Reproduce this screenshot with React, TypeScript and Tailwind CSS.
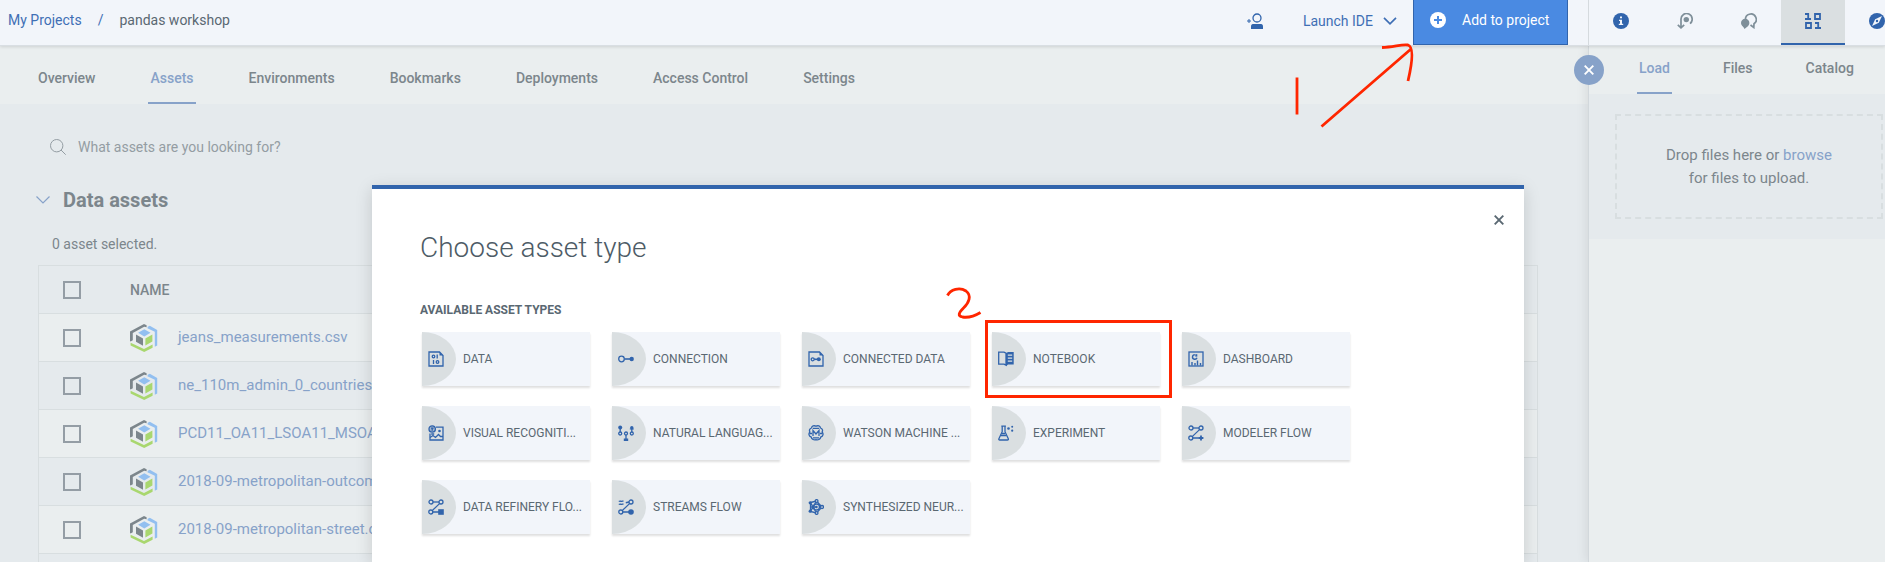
import React from "react";

type IconProps = { children: React.ReactNode; className?: string };

function Glyph({ children, className = "size-4" }: IconProps) {
  return (
    <svg
      viewBox="0 0 16 16"
      className={className}
      fill="none"
      stroke="currentColor"
      strokeWidth="1.3"
      aria-hidden="true"
    >
      {children}
    </svg>
  );
}

const solid = { fill: "currentColor", stroke: "none" };

const FlowBase = () => (
  <>
    <circle cx="2.8" cy="13" r="2" />
    <path d="M4.2 11.6 11.8 4.4M4.8 13H11" />
    <circle cx="13" cy="3" r="2" />
  </>
);

const icons = {
  data: (
    <Glyph>
      <path d="M1 1h10.5L15 4.5V15H1z" />
      <path d="M11.5 1v3.5H15z" {...solid} />
      <circle cx="5.5" cy="5.5" r="1.3" />
      <circle cx="9.5" cy="11" r="1.3" />
      <path d="M9.2 3.6v4M5.5 9v4" />
    </Glyph>
  ),
  connection: (
    <Glyph>
      <circle cx="3.5" cy="8" r="2.8" />
      <path d="M6.5 8H12" strokeWidth="1.6" />
      <circle cx="13.7" cy="8" r="2.2" {...solid} />
    </Glyph>
  ),
  connected: (
    <Glyph>
      <path d="M1 1h10.5L15 4.5V15H1z" />
      <path d="M11.5 1v3.5H15z" {...solid} />
      <circle cx="4.7" cy="8.3" r="1.5" />
      <path d="M6.2 8.3H10" strokeWidth="1.6" />
      <circle cx="10.8" cy="8.3" r="2" {...solid} />
    </Glyph>
  ),
  notebook: (
    <Glyph>
      <path d="M.7 1.2H6L8 2.2v12l-2-1H.7z" />
      <path d="M8 2.2 10 1h5.7v12.6H10l-2 1.6z" {...solid} />
      <path d="M9.8 4.2h4.4M9.8 7.2h4.4M9.8 10.2h4.4" stroke="#dadfe1" />
    </Glyph>
  ),
  dashboard: (
    <Glyph>
      <rect x="1" y="1" width="14" height="14" />
      <path d="M6.8 3.7a2.3 2.3 0 1 0 2.2 3" strokeWidth="1.4" />
      <path d="M7.3 3.2h2v2.4h-2z" {...solid} />
      <path d="M4 11v3.5M7 12v2.5M9.5 9.5v5M12.5 12v2.5" strokeWidth="1.4" />
    </Glyph>
  ),
  visual: (
    <Glyph>
      <path d="M8 2.2h7V15H2V8.5" />
      <circle cx="4.2" cy="4" r="3.2" fill="currentColor" fillOpacity=".35" />
      <path d="M3 3.2h2.6M4.2 3.2v2.6M2 12.5l3-2 2.5 2 3-3 2 2H15M3.2 9h3" />
      <circle cx="11.5" cy="6" r="1.3" {...solid} />
    </Glyph>
  ),
  language: (
    <Glyph>
      <circle cx="2.2" cy="2.5" r="2" {...solid} />
      <circle cx="13.8" cy="2.7" r="1.7" {...solid} />
      <path d="M2.2 3v4M13.8 3v4M8 10v4" />
      <circle cx="2.2" cy="8.5" r="1.5" />
      <circle cx="13.8" cy="8.5" r="1.5" />
      <circle cx="8" cy="8.5" r="1.5" />
      <path d="M5.8 13.6h4.4V16H5.8zM11.8 3.5h4v1h-4z" {...solid} />
    </Glyph>
  ),
  watson: (
    <Glyph>
      <path d="M8 1.2C6 .2 3.8 1 3.5 3 1.5 3.6 1 5.6 1.9 7 .3 8.6.8 11.5 3.2 12c.5 2.4 2.8 3.4 4.8 2.7 2 .7 4.3-.3 4.8-2.7 2.4-.5 2.9-3.4 1.3-5 .9-1.4.4-3.4-1.6-4C12.2 1 10 .2 8 1.2z" />
      <path d="M5 11V5.5L8 9l3-3.5V11M4.8 3.3h6.4M5 12.9h6M1.5 8.5H4M12 8.5h2.5" />
    </Glyph>
  ),
  experiment: (
    <Glyph>
      <path d="M3.3 1.2h4.6M4.2 1.2v5.5L.9 13.7c-.3.8.1 1.3.8 1.3h7.8c.7 0 1.1-.5.8-1.3L7 6.7V1.2" />
      <path d="M2.8 10.5h5.6M4 8.5h3" />
      <circle cx="10.5" cy="3.5" r="1.3" {...solid} />
      <circle cx="14.2" cy="1.7" r="1" {...solid} />
      <circle cx="14.2" cy="5.7" r="1.1" {...solid} />
    </Glyph>
  ),
  modeler: (
    <Glyph>
      <circle cx="3" cy="3" r="2" />
      <path d="M5 3h6" />
      <FlowBase />
      <path d="M10.8 12h1.3v-1.5h1.8V12h1.5v2h-1.5v1.5h-1.8V14h-1.3z" {...solid} />
    </Glyph>
  ),
  refinery: (
    <Glyph>
      <circle cx="3" cy="3" r="2" />
      <path d="M5 3h6" />
      <FlowBase />
      <rect x="10.2" y="10.2" width="5.6" height="5.6" {...solid} />
    </Glyph>
  ),
  streams: (
    <Glyph>
      <path d="M.8 2.5c1.5-1.2 2.6.8 4.7-.7M.8 5.5c1.5-1.2 2.6.8 4.7-.7M7.8 3.8 11 3" strokeWidth="1.4" />
      <FlowBase />
      <circle cx="13" cy="13" r="2.8" {...solid} />
    </Glyph>
  ),
  synthesized: (
    <Glyph>
      <path d="m2.5 3.5 6-1.5L14 8l-5.5 6-6-1.5zM2.5 3.5 8.5 14M8.5 2l-6 10.5M2.5 8h6" />
      <circle cx="8.5" cy="8" r="3" />
      <circle cx="8.5" cy="8" r="1.2" {...solid} />
      <circle cx="2.2" cy="3.8" r="1.6" {...solid} />
      <circle cx="2.2" cy="12.2" r="1.6" {...solid} />
      <circle cx="8.6" cy="2" r="1.4" fill="#dadfe1" />
      <circle cx="8.6" cy="14" r="1.4" fill="#dadfe1" />
      <circle cx="14" cy="8" r="1.5" fill="#dadfe1" />
    </Glyph>
  ),
};

const assetTypes = [
  { label: "DATA", icon: icons.data },
  { label: "CONNECTION", icon: icons.connection },
  { label: "CONNECTED DATA", icon: icons.connected },
  { label: "NOTEBOOK", icon: icons.notebook, marked: true },
  { label: "DASHBOARD", icon: icons.dashboard },
  { label: "VISUAL RECOGNITI...", icon: icons.visual },
  { label: "NATURAL LANGUAG...", icon: icons.language },
  { label: "WATSON MACHINE ...", icon: icons.watson },
  { label: "EXPERIMENT", icon: icons.experiment },
  { label: "MODELER FLOW", icon: icons.modeler },
  { label: "DATA REFINERY FLO...", icon: icons.refinery },
  { label: "STREAMS FLOW", icon: icons.streams },
  { label: "SYNTHESIZED NEUR...", icon: icons.synthesized },
];

const tabs = ["Overview", "Assets", "Environments", "Bookmarks", "Deployments", "Access Control", "Settings"];
const panelTabs = ["Load", "Files", "Catalog"];
const files = [
  "jeans_measurements.csv",
  "ne_110m_admin_0_countries.csv",
  "PCD11_OA11_LSOA11_MSOA11.csv",
  "2018-09-metropolitan-outcomes.csv",
  "2018-09-metropolitan-street.csv",
];

function CubeLogo() {
  return (
    <svg viewBox="0 0 28 28" className="size-7" aria-hidden="true">
      <path fill="#7c868c" d="M0 7.500 14 0l2.600 1.300v2L14.200 2.800 2.800 9v7.200L.6 17.500 0 17z" />
      <path fill="#92bff0" d="m17.800 2.800 2-1.100L27.200 6v15.500l-2.400 1.300V7.800L17.400 4.200z" />
      <path fill="#a9d76f" d="m.6 18.800 13.400 6.300 8.600-4.600v3.300L14.200 28 .6 21.500z" />
      <path fill="#92bff0" d="m14.300 5.200 6.200 3.600-6.200 3.600-6.200-3.600z" />
      <path fill="#7c868c" d="m6 10.500 7 4v7.200l-7-3.900z" />
      <path fill="#a9d76f" d="m22.400 10.500-7 4v7l7-3.900z" />
    </svg>
  );
}

function Cross({ className }: { className: string }) {
  return (
    <svg viewBox="0 0 10 10" className={className} fill="none" stroke="currentColor" strokeWidth="1.9" aria-hidden="true">
      <path d="m.7.7 8.6 8.6M9.3.7.7 9.3" />
    </svg>
  );
}

function TopBar() {
  const iconButton = "flex w-16 shrink-0 items-center justify-center border-b-2 border-transparent pb-0.5";
  return (
    <header className="relative z-10 flex h-[46px] shrink-0 border-b border-[#d9dee3] bg-[#f2f5fa] shadow-[0_1px_3px_rgba(0,0,0,0.12)]">
      <nav aria-label="Breadcrumb" className="flex flex-1 items-center gap-4 pb-1.5 pl-2">
        <a href="#projects" className="text-[#3f6fb5]">My Projects</a>
        <span className="text-[#3f6fb5]">/</span>
        <span>pandas workshop</span>
      </nav>
      <div className="mr-5 flex items-stretch">
        <button type="button" aria-label="Add collaborator" className="mr-10 flex items-center pb-1 text-[#3164ac]">
          <svg viewBox="0 0 16 16" className="size-4" fill="none" stroke="currentColor" strokeWidth="1.3" aria-hidden="true">
            <circle cx="10" cy="5" r="4" />
            <path d="M0 8h4M2 6v4" strokeWidth="1" />
            <path d="M4 16v-2.5C4 11.5 5 11 7 11h6c2 0 3 .5 3 2.5V16z" {...solid} />
          </svg>
        </button>
        <button type="button" className="mr-4 flex items-center gap-2.5 pb-1 text-[#3f6fb5]">
          Launch IDE
          <svg viewBox="0 0 14 8" className="h-2 w-3.5" fill="none" stroke="currentColor" strokeWidth="1.7" aria-hidden="true">
            <path d="m1 .8 6 6 6-6" />
          </svg>
        </button>
        <button type="button" className="flex w-[155px] items-center gap-4 border border-t-0 border-[#3164ac] bg-[#4a8ae2] pb-1 pl-4 text-white">
          <svg viewBox="0 0 16 16" className="size-4" aria-hidden="true">
            <circle cx="8" cy="8" r="8" fill="#fff" />
            <path d="M8 4v8M4 8h8" stroke="#4a8ae2" strokeWidth="2" />
          </svg>
          Add to project
        </button>
      </div>
      <div className="flex w-[297px] overflow-hidden border-l border-[#d5dade]">
        <button type="button" aria-label="Information" className={iconButton + " text-[#3164ac]"}>
          <svg viewBox="0 0 16 16" className="size-4" aria-hidden="true">
            <circle cx="8" cy="8" r="8" fill="currentColor" />
            <path d="M7 3.5h2v1.8H7zM6 6.7h3v4.1h1.2V12H5.8v-1.2H7V8H6z" fill="#f2f5fa" />
          </svg>
        </button>
        <button type="button" aria-label="History" className={iconButton + " text-[#7f8f99]"}>
          <svg viewBox="0 0 16 16" className="size-4" fill="none" stroke="currentColor" strokeWidth="1.7" aria-hidden="true">
            <path d="M13 10.6A5.6 5.6 0 1 0 4 6.4V14.5M.8 11.8l3.2 3 3.2-3" />
            <circle cx="9.3" cy="6.6" r="2.7" {...solid} />
          </svg>
        </button>
        <button type="button" aria-label="Comments" className={iconButton + " text-[#7f8f99]"}>
          <svg viewBox="0 0 16 16" className="size-4" fill="none" stroke="currentColor" strokeWidth="1.7" aria-hidden="true">
            <path d="M4.5 7A5.4 5.4 0 1 1 13 10.8l-.2 3.7L9.5 12" />
            <path d="M1.5 12.5 3.5 16l3-2.5z" {...solid} />
            <circle cx="4.2" cy="10" r="4.2" {...solid} />
          </svg>
        </button>
        <button type="button" aria-label="Data" className="flex w-16 shrink-0 items-center justify-center border-b-2 border-[#3164ac] bg-[#dadfe1] pb-0.5 text-[#3164ac]">
          <svg viewBox="0 0 16 16" className="size-4" fill="none" stroke="currentColor" strokeWidth="1.8" aria-hidden="true">
            <path d="M0 1h3.2v4.5M0 6h6M10 1h5v5h-5zM1 10h5v5H1zM10 10h3.2v4.5M10 15h6" />
          </svg>
        </button>
        <button type="button" aria-label="Explore" className={iconButton + " text-[#3164ac]"}>
          <svg viewBox="0 0 16 16" className="size-4" aria-hidden="true">
            <circle cx="8" cy="8" r="8" fill="currentColor" />
            <path d="M13 3 9.8 9.8 3 13l3.2-6.8z" fill="#f2f5fa" />
            <circle cx="8" cy="8" r="1.2" fill="currentColor" />
          </svg>
        </button>
      </div>
    </header>
  );
}

function AssetsPage() {
  return (
    <main className="flex min-w-0 flex-1 flex-col bg-[#e5eaed] text-[#7c868c]">
      <nav aria-label="Project" className="flex h-[58px] shrink-0 gap-[51px] bg-[#eaeeef] pl-9 font-medium">
        {tabs.map((tab) => (
          <a
            key={tab}
            href={"#" + tab}
            className={
              tab === "Assets"
                ? "flex items-center border-b-2 border-[#87a2c9] px-0.5 pt-2 text-[#87a2c9]"
                : "flex items-center border-b-2 border-transparent px-0.5 pt-2"
            }
          >
            {tab}
          </a>
        ))}
      </nav>
      <div className="flex flex-col pt-[31px] pr-[50px] pl-[38px]">
        <label className="flex h-6 items-center gap-3 pl-3">
          <svg viewBox="0 0 16 16" className="size-4" fill="none" stroke="#949da3" strokeWidth="1" aria-hidden="true">
            <circle cx="6.7" cy="6.7" r="6.2" />
            <path d="m11 11 4.7 4.7" />
          </svg>
          <input
            type="search"
            aria-label="Search assets"
            placeholder="What assets are you looking for?"
            className="w-80 bg-transparent outline-none placeholder:text-[#949da3]"
          />
        </label>
        <h2 className="mt-[25px] flex h-8 items-center gap-[13px] text-xl font-bold">
          <svg viewBox="0 0 14 8" className="-ml-0.5 h-2 w-3.5" fill="none" stroke="#87a2c9" strokeWidth="1.2" aria-hidden="true">
            <path d="m.5.5 6.5 6.5L13.5.5" />
          </svg>
          Data assets
        </h2>
        <p className="mt-[18px] mb-[11px] pl-3.5 leading-5">0 asset selected.</p>
        <table className="w-full table-fixed border-separate border-spacing-0 border border-b-0 border-[#d8dee0] text-left">
          <thead>
            <tr className="h-12">
              <th className="w-[91px] border-b border-[#d8dee0] pl-6">
                <input type="checkbox" aria-label="Select all" className="block size-[18px] appearance-none border-2 border-[#949da5]" />
              </th>
              <th className="border-b border-[#d8dee0] font-medium">NAME</th>
            </tr>
          </thead>
          <tbody>
            {files.map((file) => (
              <tr key={file} className="h-12 odd:bg-[#eaeeef]">
                <td className="border-b border-[#d8dee0] pl-6">
                  <input type="checkbox" aria-label={"Select " + file} className="block size-[18px] appearance-none border-2 border-[#949da5]" />
                </td>
                <td className="border-b border-[#d8dee0]">
                  <div className="flex items-center gap-5">
                    <CubeLogo />
                    <a href="#asset" className="text-[15px] text-[#87a2c9]">{file}</a>
                  </div>
                </td>
              </tr>
            ))}
            <tr className="h-12">
              <td colSpan={2} />
            </tr>
          </tbody>
        </table>
      </div>
    </main>
  );
}

function SidePanel() {
  return (
    <aside className="relative flex w-[297px] shrink-0 flex-col border-l border-[#d2d8dc] bg-[#eaeeef] text-[#7c868c] shadow-[-2px_0_10px_rgba(0,0,0,0.08)]">
      <button
        type="button"
        aria-label="Close panel"
        className="absolute top-[9px] -left-[15px] flex size-[30px] items-center justify-center rounded-full bg-[#87a2c9] text-white"
      >
        <Cross className="size-2.5" />
      </button>
      <nav aria-label="Data panel" className="flex h-12 gap-[49px] pl-12 font-medium">
        {panelTabs.map((tab) => (
          <a
            key={tab}
            href={"#" + tab}
            className={
              tab === "Load"
                ? "flex items-center border-b-2 border-[#87a2c9] px-0.5 pb-0.5 text-[#87a2c9]"
                : "flex items-center border-b-2 border-transparent px-0.5 pb-0.5"
            }
          >
            {tab}
          </a>
        ))}
      </nav>
      <div className="bg-[#e5eaed] pt-5 pr-0.5 pb-5 pl-[26px]">
        <div className="flex h-[105px] flex-col justify-center border-2 border-dashed border-[#d8dee0] text-center text-[15px] leading-[23px]">
          <p>
            Drop files here or <a href="#browse" className="text-[#87a2c9]">browse</a>
          </p>
          <p>for files to upload.</p>
        </div>
      </div>
    </aside>
  );
}

function AssetDialog() {
  return (
    <div className="absolute inset-0 z-20 flex justify-center pt-[185px] pl-[11px]">
      <section
        role="dialog"
        aria-label="Choose asset type"
        className="relative h-full w-[1152px] shrink-0 border-t-4 border-[#3164ac] bg-white px-12 pt-[37px] shadow-[0_4px_16px_rgba(0,0,0,0.15)]"
      >
        <button type="button" aria-label="Close" className="absolute top-[26px] right-5 text-[#5a6872]">
          <Cross className="size-2.5" />
        </button>
        <h1 className="text-[28px] leading-[44px] font-light text-[#4d5b66]">Choose asset type</h1>
        <h2 className="mt-[30px] text-xs leading-5 font-bold">AVAILABLE ASSET TYPES</h2>
        <ul className="mt-3 grid grid-cols-[repeat(5,168px)] gap-x-[22px] gap-y-5 pl-0.5">
          {assetTypes.map((type) => (
            <li key={type.label} className="relative">
              <button
                type="button"
                className="flex h-[54px] w-full items-center bg-[#f2f5fa] text-left text-xs shadow-[0_2px_2px_rgba(0,0,0,0.13)]"
              >
                <span className="flex h-full w-[34px] shrink-0 items-center rounded-r-[100%_50%] bg-[#dadfe1] pl-1.5 text-[#3164ac]">
                  {type.icon}
                </span>
                <span className="pl-[7px] whitespace-nowrap">{type.label}</span>
              </button>
              {type.marked && (
                <span className="pointer-events-none absolute -top-3 -right-3 -bottom-3 -left-[7px] border-3 border-[#ff2600]" />
              )}
            </li>
          ))}
        </ul>
      </section>
    </div>
  );
}

function Annotations() {
  return (
    <svg
      className="pointer-events-none absolute inset-0 z-30 size-full"
      fill="none"
      stroke="#ff2600"
      strokeWidth="2.8"
      aria-hidden="true"
    >
      <path d="M1297 77.5v37" />
      <path d="M1321.5 126.5 1411 49M1382 47.5c12-.5 20-3.5 26-2.5 6.5 2 3.5 21 0 36" />
      <path d="M947.5 295.5c3-6 12-9 18.500-4.500 6 4.500 3 12-2.500 17-5 5-6 8-1 9 6 1 13-1.500 18-4.500" />
    </svg>
  );
}

export default function App() {
  return (
    <div className="relative flex h-screen flex-col overflow-hidden bg-[#e5eaed] font-[Roboto,'Liberation_Sans',sans-serif] text-sm text-[#5a6872]">
      <TopBar />
      <div className="flex min-h-0 flex-1">
        <AssetsPage />
        <SidePanel />
      </div>
      <AssetDialog />
      <Annotations />
    </div>
  );
}
